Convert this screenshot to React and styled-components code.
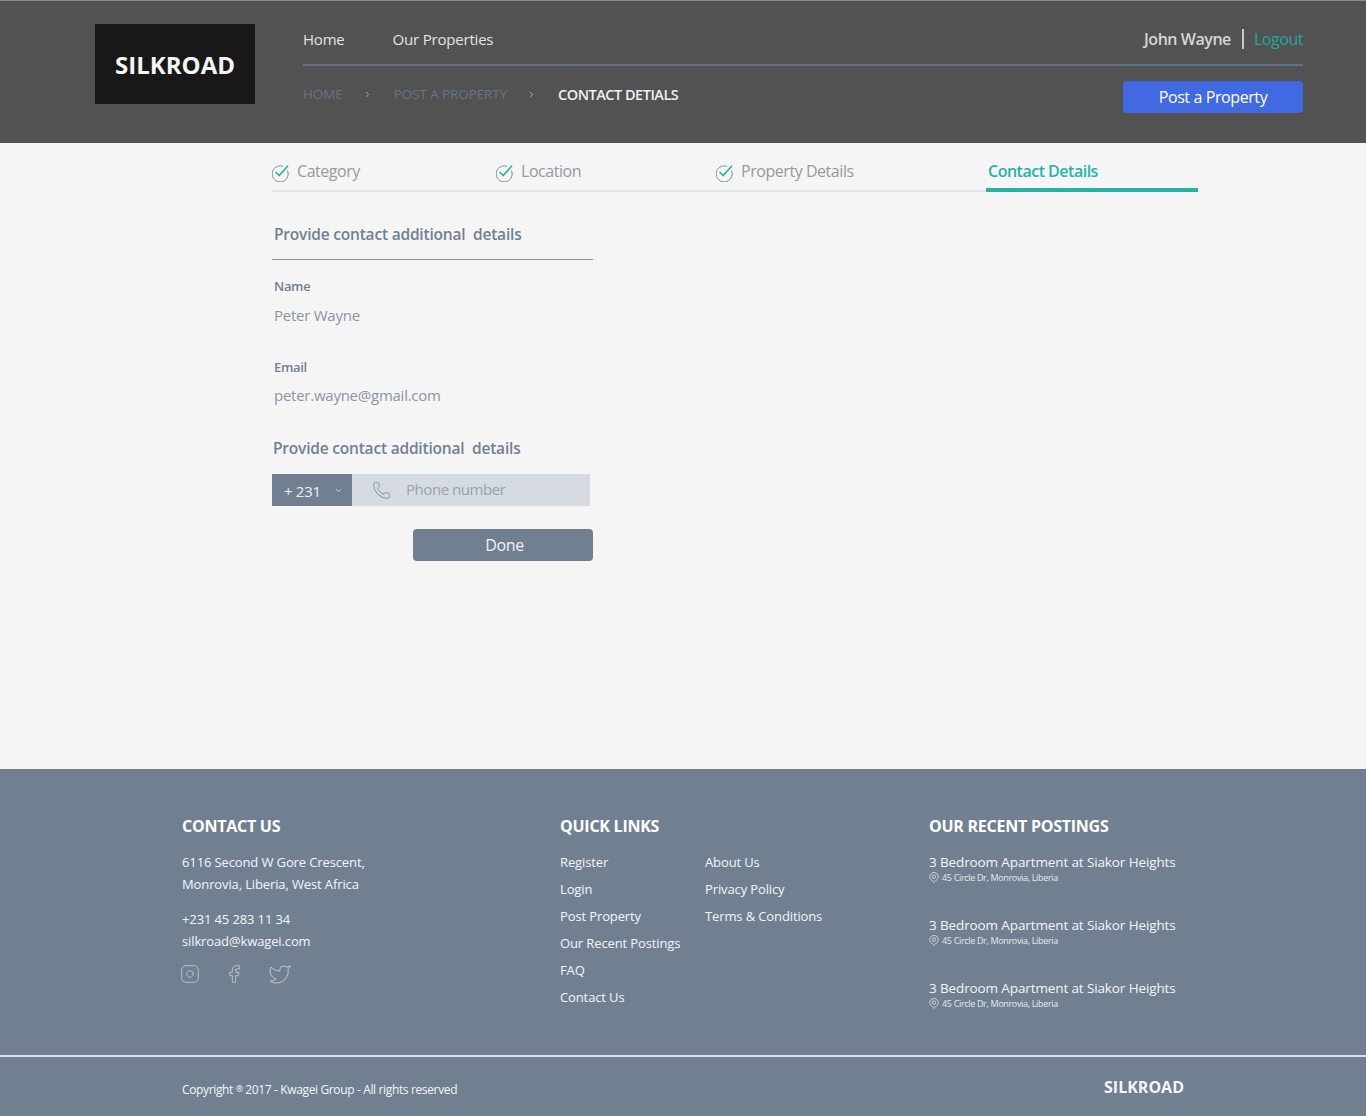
import React from 'react'
import styled, { createGlobalStyle } from 'styled-components'
import { Phone, Instagram, Facebook, Twitter, ChevronDown, ChevronRight } from 'lucide-react'

const GlobalStyle = createGlobalStyle`
  * { box-sizing: border-box; }
  html, body { margin: 0; padding: 0; }
  body {
    background: #f5f5f5;
    font-family: "Open Sans", "Noto Sans", sans-serif;
    letter-spacing: -0.3px;
  }
`

const Header = styled.header`
  height: 143px;
  background: #525252;
  border-top: 1px solid #8a8a8a;
  padding: 23px 63px 0 95px;
  display: flex;
`

const Logo = styled.div`
  width: 160px;
  height: 80px;
  background: #181818;
  color: #f5f5f5;
  font-size: 24px;
  font-weight: 700;
  letter-spacing: 0;
  display: flex;
  align-items: center;
  justify-content: center;
  margin-right: 48px;
`

const HeaderMain = styled.div`
  flex: 1;
`

const TopRow = styled.div`
  height: 42px;
  border-bottom: 2px solid #5f7087;
  display: flex;
  align-items: center;
  justify-content: space-between;
  padding-bottom: 10px;
`

const Nav = styled.nav`
  display: flex;
  gap: 48px;
`

const NavLink = styled.a`
  color: #e4e4e4;
  font-size: 15px;
  letter-spacing: -0.2px;
`

const User = styled.div`
  display: flex;
  align-items: center;
  font-size: 16px;
  letter-spacing: -0.45px;
`

const UserName = styled.span`
  color: #d6d6d6;
  font-weight: 600;
  padding-right: 11px;
  border-right: 2px solid #c8c8c8;
  margin-right: 10px;
  line-height: 20px;
`

const Logout = styled.a`
  color: #25a79a;
`

const BottomRow = styled.div`
  display: flex;
  justify-content: space-between;
  align-items: flex-start;
  padding-top: 15px;
`

const Crumbs = styled.div`
  display: flex;
  align-items: center;
  height: 26px;
  font-size: 13.5px;
`

const Crumb = styled.span`
  color: ${props => props.current ? '#f0f0f0' : '#64748a'};
  font-weight: ${props => props.current ? 600 : 400};
  font-size: ${props => props.current ? '14.5px' : '13.5px'};
  letter-spacing: ${props => props.current ? '-0.5px' : '-0.1px'};
`

const CrumbSep = styled.span`
  color: #c8c8c8;
  display: flex;
  width: ${props => props.w}px;
  padding-left: 20px;
`

const PostButton = styled.button`
  width: 180px;
  height: 32px;
  border: none;
  border-radius: 4px;
  background: #4169e1;
  color: #fff;
  font-family: inherit;
  font-size: 16px;
  letter-spacing: -0.4px;
`

const Content = styled.main`
  height: 626px;
  padding-left: 272px;
`

const Steps = styled.div`
  width: 926px;
  height: 49px;
  display: flex;
  border-bottom: 2px solid #dfe2e6;
`

const Step = styled.div`
  width: ${props => props.w}px;
  height: 49px;
  padding: 17px 0 0 ${props => props.active ? '2px' : '0'};
  display: flex;
  align-items: flex-start;
  align-self: flex-start;
  gap: 6px;
  font-size: 16px;
  line-height: 22px;
  letter-spacing: ${props => props.active ? '-0.5px' : '-0.45px'};
  color: ${props => props.active ? '#25b3a5' : '#969a9e'};
  font-weight: ${props => props.active ? 600 : 400};
  border-bottom: ${props => props.active ? '4px solid #25b3a5' : 'none'};

  svg {
    margin-top: 4px;
  }
`

const Form = styled.section`
  width: 321px;
`

const FormTitle = styled.h3`
  margin: 0;
  font-size: 15.5px;
  font-weight: 600;
  letter-spacing: -0.2px;
  color: #718093;
  white-space: pre;
  padding-left: ${props => props.first ? '2px' : '1px'};
  line-height: 20px;
`

const TitleBar = styled.div`
  padding-top: 32px;
  height: 68px;
  border-bottom: 1px solid #8a929c;
`

const Field = styled.div`
  padding-left: 2px;
  height: ${props => props.h}px;
  padding-top: ${props => props.top}px;
`

const FieldLabel = styled.div`
  font-size: 13px;
  font-weight: 600;
  color: #718093;
  line-height: 18px;
`

const FieldValue = styled.div`
  font-size: 15px;
  letter-spacing: -0.25px;
  color: #8a95a3;
  line-height: 20px;
  margin-top: ${props => props.gap}px;
`

const PhoneRow = styled.div`
  display: flex;
  width: 318px;
  height: 32px;
  margin-top: 16px;
`

const CountryCode = styled.div`
  width: 80px;
  background: #708090;
  color: #eef0f2;
  font-size: 15px;
  display: flex;
  align-items: center;
  padding: 1px 0 0 12px;
  gap: 13px;
`

const PhoneField = styled.div`
  flex: 1;
  background: #d6dbe3;
  display: flex;
  align-items: center;
  padding-left: 20px;
  gap: 15px;
  color: #708090;
`

const PhoneText = styled.span`
  font-size: 15px;
  letter-spacing: -0.45px;
  color: #98a1ac;
  margin-top: -2px;
`

const DoneRow = styled.div`
  display: flex;
  justify-content: flex-end;
  margin-top: 23px;
`

const DoneButton = styled.button`
  width: 180px;
  height: 32px;
  border: none;
  border-radius: 4px;
  background: #708090;
  color: #f0f0f0;
  font-family: inherit;
  font-size: 16px;
  letter-spacing: -0.4px;
  padding-left: 9px;
`

const Footer = styled.footer`
  height: 347px;
  background: #708090;
  color: #f5f5f5;
`

const FooterMain = styled.div`
  height: 288px;
  padding: 45px 0 0 182px;
  border-bottom: 2px solid #dde1e5;
  display: grid;
  grid-template-columns: 378px 369px 1fr;
`

const FooterTitle = styled.h4`
  margin: 0 0 13px;
  font-size: 16px;
  font-weight: 700;
  line-height: 24px;
  color: #fff;
  letter-spacing: -0.25px;
`

const FooterLine = styled.div`
  font-size: 13px;
  line-height: 22px;
  letter-spacing: -0.12px;
  margin-bottom: ${props => props.mb || 0}px;
`

const Social = styled.div`
  display: flex;
  align-items: center;
  gap: 24px;
  margin: 10px 0 0 -2px;
  color: #c5ccd3;
`

const LinkColumns = styled.div`
  display: flex;
  margin-top: -2px;
`

const LinkList = styled.div`
  width: ${props => props.w}px;
  display: flex;
  flex-direction: column;
`

const FooterLink = styled.a`
  font-size: 13px;
  line-height: 27px;
  letter-spacing: -0.12px;
`

const Posting = styled.div`
  height: 63px;
  padding-top: 1px;
`

const PostingTitle = styled.div`
  font-size: 13.5px;
  line-height: 21px;
  letter-spacing: -0.12px;
  margin-bottom: -1px;
`

const PostingAddress = styled.div`
  display: flex;
  align-items: center;
  gap: 3px;
  font-size: 9px;
  line-height: 10px;
  letter-spacing: -0.33px;
  color: #e6e9ec;
`

const FooterBottom = styled.div`
  display: flex;
  justify-content: space-between;
  align-items: center;
  padding: 0 182px;
  height: 57px;
`

const Copyright = styled.span`
  font-size: 12px;
  letter-spacing: -0.36px;
  margin-top: 8px;
`

const Reg = styled.span`
  font-size: 9px;
  letter-spacing: 0;
  vertical-align: 2px;
  margin-right: 2px;
`

const FooterBrand = styled.span`
  font-size: 16px;
  font-weight: 700;
  letter-spacing: 0;
  margin-top: 2px;
`

const CheckIcon = () => (
  <svg width="19" height="18" viewBox="1 0 19 18" fill="none">
    <path d="M16.400 6.500A8 8 0 1 1 12 2.400" stroke="#7c8a9a" strokeWidth="1" />
    <path d="M4.600 8l3.600 3.600L17 1.800" stroke="#25b3a5" strokeWidth="1.600" />
  </svg>
)

const PinIcon = () => (
  <svg width="10" height="11" viewBox="0 0 10 11" fill="none" stroke="#dfe3e7" strokeWidth="0.8">
    <path d="M5 10.400C3 8.600.7 6.800.7 4.600a4.300 4.100 0 0 1 8.600 0C9.300 6.800 7 8.600 5 10.400Z" />
    <circle cx="5" cy="4.600" r="1.700" />
  </svg>
)

const postings = [1, 2, 3]

export default function App() {
  return (
    <>
      <GlobalStyle />
      <Header>
        <Logo>SILKROAD</Logo>
        <HeaderMain>
          <TopRow>
            <Nav>
              <NavLink>Home</NavLink>
              <NavLink>Our Properties</NavLink>
            </Nav>
            <User>
              <UserName>John Wayne</UserName>
              <Logout>Logout</Logout>
            </User>
          </TopRow>
          <BottomRow>
            <Crumbs>
              <Crumb>HOME</Crumb>
              <CrumbSep w={51}><ChevronRight size={9} /></CrumbSep>
              <Crumb>POST A PROPERTY</Crumb>
              <CrumbSep w={51}><ChevronRight size={9} /></CrumbSep>
              <Crumb current>CONTACT DETIALS</Crumb>
            </Crumbs>
            <PostButton>Post a Property</PostButton>
          </BottomRow>
        </HeaderMain>
      </Header>
      <Content>
        <Steps>
          <Step w={224}><CheckIcon />Category</Step>
          <Step w={220}><CheckIcon />Location</Step>
          <Step w={270}><CheckIcon />Property Details</Step>
          <Step w={212} active>Contact Details</Step>
        </Steps>
        <Form>
          <TitleBar>
            <FormTitle first>{'Provide contact additional  details'}</FormTitle>
          </TitleBar>
          <Field h={81} top={17}>
            <FieldLabel>Name</FieldLabel>
            <FieldValue gap={10}>Peter Wayne</FieldValue>
          </Field>
          <Field h={97} top={17}>
            <FieldLabel>Email</FieldLabel>
            <FieldValue gap={9}>peter.wayne@gmail.com</FieldValue>
          </Field>
          <FormTitle>{'Provide contact additional  details'}</FormTitle>
          <PhoneRow>
            <CountryCode>+ 231<ChevronDown size={9} /></CountryCode>
            <PhoneField>
              <Phone size={19} strokeWidth={1} />
              <PhoneText>Phone number</PhoneText>
            </PhoneField>
          </PhoneRow>
          <DoneRow><DoneButton>Done</DoneButton></DoneRow>
        </Form>
      </Content>
      <Footer>
        <FooterMain>
          <div>
            <FooterTitle>CONTACT US</FooterTitle>
            <FooterLine>6116 Second W Gore Crescent,</FooterLine>
            <FooterLine mb={13}>Monrovia, Liberia, West Africa</FooterLine>
            <FooterLine>+231 45 283 11 34</FooterLine>
            <FooterLine>silkroad@kwagei.com</FooterLine>
            <Social>
              <Instagram size={20} strokeWidth={1} />
              <Facebook size={20} strokeWidth={1} />
              <Twitter size={24} strokeWidth={1} />
            </Social>
          </div>
          <div>
            <FooterTitle>QUICK LINKS</FooterTitle>
            <LinkColumns>
              <LinkList w={145}>
                <FooterLink>Register</FooterLink>
                <FooterLink>Login</FooterLink>
                <FooterLink>Post Property</FooterLink>
                <FooterLink>Our Recent Postings</FooterLink>
                <FooterLink>FAQ</FooterLink>
                <FooterLink>Contact Us</FooterLink>
              </LinkList>
              <LinkList w={200}>
                <FooterLink>About Us</FooterLink>
                <FooterLink>Privacy Policy</FooterLink>
                <FooterLink>Terms &amp; Conditions</FooterLink>
              </LinkList>
            </LinkColumns>
          </div>
          <div>
            <FooterTitle>OUR RECENT POSTINGS</FooterTitle>
            {postings.map(id => (
              <Posting key={id}>
                <PostingTitle>3 Bedroom Apartment at Siakor Heights</PostingTitle>
                <PostingAddress><PinIcon />45 Circle Dr, Monrovia, Liberia</PostingAddress>
              </Posting>
            ))}
          </div>
        </FooterMain>
        <FooterBottom>
          <Copyright>Copyright <Reg>®</Reg>2017 - Kwagei Group - All rights reserved</Copyright>
          <FooterBrand>SILKROAD</FooterBrand>
        </FooterBottom>
      </Footer>
    </>
  )
}
